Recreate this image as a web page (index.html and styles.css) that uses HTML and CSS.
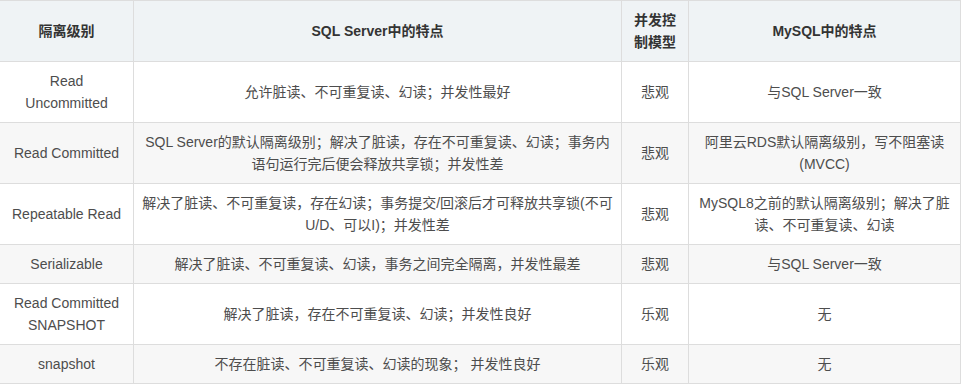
FILE: index.html
```html
<!DOCTYPE html>
<html lang="zh-CN">
<head>
<meta charset="utf-8">
<title>隔离级别对比</title>
<link rel="stylesheet" href="styles.css">
</head>
<body>
<table class="iso-table">
  <colgroup>
    <col class="c-level">
    <col class="c-sqlserver">
    <col class="c-model">
    <col class="c-mysql">
  </colgroup>
  <thead>
    <tr>
      <th>隔离级别</th>
      <th>SQL Server中的特点</th>
      <th>并发控<br>制模型</th>
      <th>MySQL中的特点</th>
    </tr>
  </thead>
  <tbody>
    <tr class="tall">
      <td>Read<br>Uncommitted</td>
      <td>允许脏读、不可重复读、幻读；并发性最好</td>
      <td>悲观</td>
      <td>与SQL Server一致</td>
    </tr>
    <tr class="tall">
      <td>Read Committed</td>
      <td>SQL Server的默认隔离级别；解决了脏读，存在不可重复读、幻读；事务内<br>语句运行完后便会释放共享锁；并发性差</td>
      <td>悲观</td>
      <td>阿里云RDS默认隔离级别，写不阻塞读<br>(MVCC)</td>
    </tr>
    <tr class="tall">
      <td>Repeatable Read</td>
      <td>解决了脏读、不可重复读，存在幻读；事务提交/回滚后才可释放共享锁(不可<br>U/D、可以I)；并发性差</td>
      <td>悲观</td>
      <td>MySQL8之前的默认隔离级别；解决了脏<br>读、不可重复读、幻读</td>
    </tr>
    <tr>
      <td>Serializable</td>
      <td>解决了脏读、不可重复读、幻读，事务之间完全隔离，并发性最差</td>
      <td>悲观</td>
      <td>与SQL Server一致</td>
    </tr>
    <tr class="tall">
      <td>Read Committed<br>SNAPSHOT</td>
      <td>解决了脏读，存在不可重复读、幻读；并发性良好</td>
      <td>乐观</td>
      <td>无</td>
    </tr>
    <tr>
      <td>snapshot</td>
      <td>不存在脏读、不可重复读、幻读的现象； 并发性良好</td>
      <td>乐观</td>
      <td>无</td>
    </tr>
  </tbody>
</table>
</body>
</html>
```

FILE: styles.css
```css
html, body {
  margin: 0;
  padding: 0;
  background: #ffffff;
}

body {
  font-family: "Liberation Sans", Arial, "Noto Sans CJK SC", sans-serif;
  font-size: 14px;
  line-height: 22px;
  color: #4d4d4d;
}

.iso-table {
  width: 961px;
  table-layout: fixed;
  border-collapse: separate;
  border-spacing: 0;
}

.c-level { width: 134px; }
.c-sqlserver { width: 488px; }
.c-model { width: 67px; }
.c-mysql { width: 272px; }

.iso-table th,
.iso-table td {
  box-sizing: border-box;
  padding: 8px 6px;
  text-align: center;
  vertical-align: middle;
  border-right: 1px solid #dddddd;
  border-bottom: 1px solid #dddddd;
  white-space: nowrap;
}

.iso-table th {
  background: #eff3f5;
  color: #333333;
  font-weight: bold;
  border-top: 1px solid #dddddd;
  height: 62px;
}

.iso-table tbody tr {
  height: 39px;
}

.iso-table tbody tr.tall {
  height: 61px;
}

.iso-table tbody tr:nth-child(odd) td {
  background: #ffffff;
}

.iso-table tbody tr:nth-child(even) td {
  background: #f7f7f7;
}
```
